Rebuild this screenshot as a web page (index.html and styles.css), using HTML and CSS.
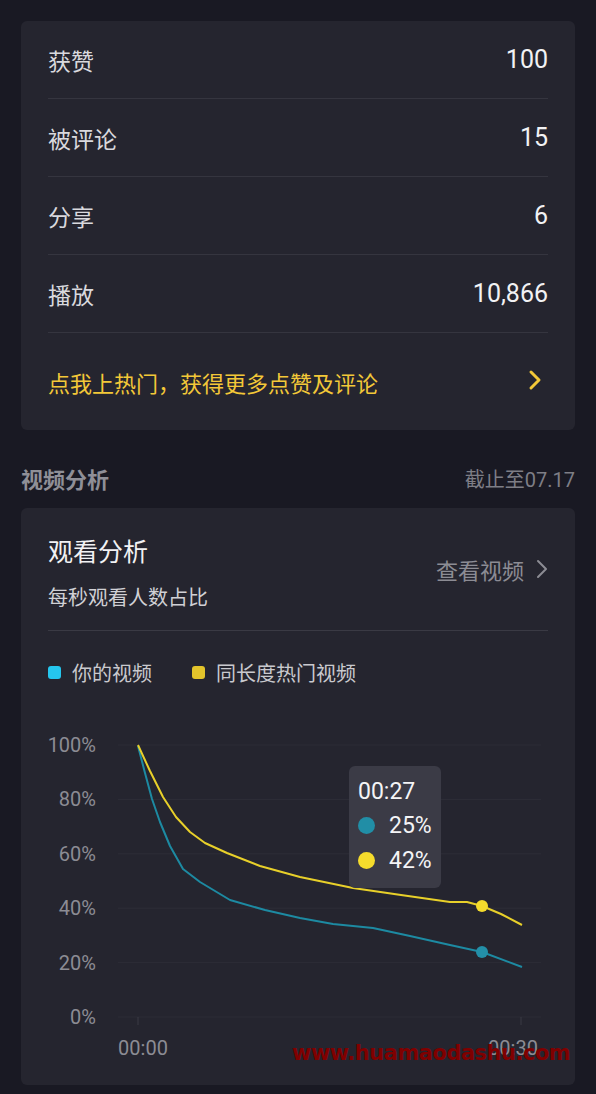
FILE: index.html
```html
<!DOCTYPE html>
<html>

<head>
    <meta charset="UTF-8">
    <title>作品数据</title>
    <link rel="stylesheet" href="styles.css">
</head>

<body>
    <div class="page">
        <!-- 数据概览 -->
        <div class="card stats">
            <div class="stat-row"><span class="stat-name">获赞</span><span class="stat-num">100</span></div>
            <div class="stat-row"><span class="stat-name">被评论</span><span class="stat-num">15</span></div>
            <div class="stat-row"><span class="stat-name">分享</span><span class="stat-num">6</span></div>
            <div class="stat-row"><span class="stat-name">播放</span><span class="stat-num">10,866</span></div>
            <div class="promo">
                <span>点我上热门，获得更多点赞及评论</span>
                <svg class="promo-arrow" width="14" height="22" viewBox="0 0 14 22">
                    <path d="M3 3 L11 11 L3 19" fill="none" stroke="#f3c838" stroke-width="3" stroke-linecap="round" stroke-linejoin="round" />
                </svg>
            </div>
        </div>

        <div class="section-head">
            <span class="section-title">视频分析</span>
            <span class="section-date">截止至07.17</span>
        </div>

        <!-- 观看分析 -->
        <div class="card analysis">
            <div class="analysis-head">
                <div>
                    <div class="analysis-title">观看分析</div>
                    <div class="analysis-sub">每秒观看人数占比</div>
                </div>
                <div class="view-link">
                    <span>查看视频</span>
                    <svg width="12" height="22" viewBox="0 0 12 22">
                        <path d="M2 3 L10 11 L2 19" fill="none" stroke="#8c8c94" stroke-width="2" stroke-linecap="round" stroke-linejoin="round" />
                    </svg>
                </div>
            </div>
            <div class="legend">
                <span class="legend-item"><i class="dot-blue"></i>你的视频</span>
                <span class="legend-item"><i class="dot-yellow"></i>同长度热门视频</span>
            </div>
            <div class="chart">
                <svg width="555" height="400" viewBox="0 0 555 400">
                    <g stroke="#2d2d37" stroke-width="1">
                        <line x1="97" y1="60" x2="520" y2="60" />
                        <line x1="97" y1="114.4" x2="520" y2="114.4" />
                        <line x1="97" y1="168.8" x2="520" y2="168.8" />
                        <line x1="97" y1="223.2" x2="520" y2="223.2" />
                        <line x1="97" y1="277.6" x2="520" y2="277.6" />
                        <line x1="97" y1="332" x2="520" y2="332" />
                        <line x1="117" y1="332" x2="117" y2="340" stroke="#3a3a44" />
                        <line x1="500" y1="332" x2="500" y2="340" stroke="#3a3a44" />
                    </g>
                    <g class="axis" text-anchor="end">
                        <text x="75" y="67">100%</text>
                        <text x="75" y="121.4">80%</text>
                        <text x="75" y="175.8">60%</text>
                        <text x="75" y="230.2">40%</text>
                        <text x="75" y="284.6">20%</text>
                        <text x="75" y="339">0%</text>
                    </g>
                    <g class="axis" text-anchor="middle">
                        <text x="122" y="370">00:00</text>
                        <text x="492" y="370">00:30</text>
                    </g>
                    <polyline fill="none" stroke="#1d8aa2" stroke-width="2" stroke-linejoin="round"
                        points="117,61 124,88 131,114 139,137 149,161 162,184 179,197 209,215 244,225 279,233 312,239 352,243 389,251 429,260 461,267 501,282" />
                    <polyline fill="none" stroke="#e8d02a" stroke-width="2" stroke-linejoin="round"
                        points="117,60 129,86 142,112 155,132 169,147 184,158 206,168 239,181 279,192 332,203 380,210 429,217 446,217 461,221 480,229 501,240" />
                    <circle cx="461" cy="267" r="6" fill="#238fa8" />
                    <circle cx="461" cy="221" r="6" fill="#f5dc2c" />
                </svg>
                <div class="tip">
                    <div class="tip-time">00:27</div>
                    <div class="tip-row"><i class="tip-dot blue"></i>25%</div>
                    <div class="tip-row"><i class="tip-dot yellow"></i>42%</div>
                </div>
                <div class="watermark">www.huamaodashu.com</div>
            </div>
        </div>
    </div>
</body>

</html>
```

FILE: styles.css
```css
body {
    margin: 0;
    background-color: #191923;
    font-family: Roboto, "Noto Sans CJK SC", sans-serif;
}

.page {
    padding: 21px 21px 0;
}

.card {
    background-color: #25252f;
    border-radius: 6px;
}

.stats {
    padding: 0 27px;
}

.stat-row {
    display: flex;
    justify-content: space-between;
    align-items: center;
    height: 77px;
    border-bottom: 1px solid #35353f;
}

.stat-name {
    font-size: 23px;
    color: #d9d9de;
}

.stat-num {
    font-size: 25px;
    color: #f2f2f4;
}

.promo {
    display: flex;
    justify-content: space-between;
    align-items: center;
    height: 97px;
    font-size: 22px;
    color: #f3c838;
}

.promo-arrow {
    margin-right: 6px;
    margin-top: -4px;
}

.section-head {
    display: flex;
    justify-content: space-between;
    align-items: center;
    height: 30px;
    margin: 33px 0 15px;
}

.section-title {
    font-size: 22px;
    font-weight: bold;
    color: #8f8f97;
}

.section-date {
    font-size: 20px;
    color: #7e7e86;
}

.analysis {
    position: relative;
    height: 577px;
}

.analysis-head {
    display: flex;
    justify-content: space-between;
    align-items: center;
    margin: 0 27px;
    padding: 30px 0 18px;
    border-bottom: 1px solid #3a3a44;
}

.analysis-title {
    font-size: 25px;
    line-height: 30px;
    color: #f2f2f4;
}

.analysis-sub {
    margin-top: 16px;
    font-size: 20px;
    line-height: 28px;
    color: #d0d0d5;
}

.view-link {
    display: flex;
    align-items: center;
    gap: 12px;
    font-size: 22px;
    color: #8c8c94;
    margin-top: -12px;
}

.legend {
    display: flex;
    gap: 40px;
    margin: 28px 27px 0;
    height: 26px;
    align-items: center;
    font-size: 20px;
    color: #c9c9ce;
}

.legend-item {
    display: flex;
    align-items: center;
    gap: 11px;
}

.legend-item i {
    display: block;
    width: 13px;
    height: 13px;
    border-radius: 3px;
}

.dot-blue {
    background-color: #25c6ee;
}

.dot-yellow {
    background-color: #e3c42b;
}

.chart {
    position: relative;
    height: 400px;
}

.chart svg {
    display: block;
}

.axis {
    font-family: Roboto, sans-serif;
    font-size: 20px;
    fill: #8c8c94;
}

.tip {
    position: absolute;
    left: 328px;
    top: 81px;
    width: 92px;
    height: 122px;
    box-sizing: border-box;
    padding: 9px 0 0 9px;
    background-color: #3b3b46;
    border-radius: 6px;
    color: #f4f4f6;
}

.tip-time {
    font-size: 23px;
    line-height: 33px;
}

.tip-row {
    display: flex;
    align-items: center;
    font-size: 23px;
    line-height: 35px;
}

.tip-dot {
    display: block;
    width: 17px;
    height: 17px;
    border-radius: 50%;
    margin-right: 14px;
}

.tip-dot.blue {
    background-color: #218ea6;
}

.tip-dot.yellow {
    background-color: #f5dc2c;
}

.watermark {
    position: absolute;
    left: 271px;
    top: 356px;
    font-family: "DejaVu Sans", sans-serif;
    font-weight: bold;
    font-size: 21px;
    letter-spacing: -0.5px;
    color: #800000;
}
```
